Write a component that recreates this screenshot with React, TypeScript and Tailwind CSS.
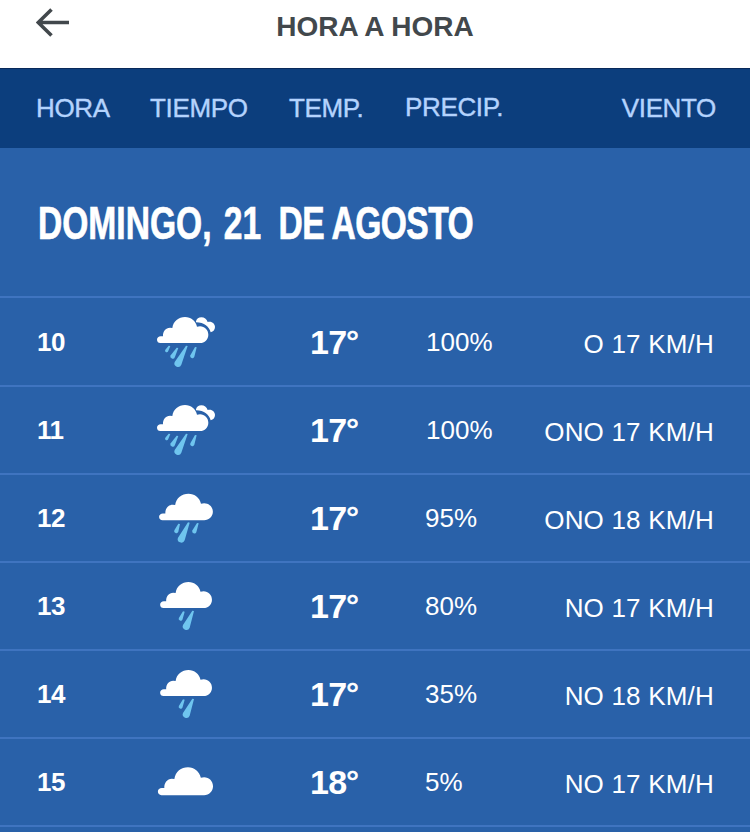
import React from 'react';

type Sky = 'heavy' | 'rain' | 'light' | 'cloud';

interface HourForecast {
  hour: string;
  sky: Sky;
  temp: number;
  precip: string;
  wind: string;
}

const hours: HourForecast[] = [
  { hour: '10', sky: 'heavy', temp: 17, precip: '100%', wind: 'O 17 KM/H' },
  { hour: '11', sky: 'heavy', temp: 17, precip: '100%', wind: 'ONO 17 KM/H' },
  { hour: '12', sky: 'rain', temp: 17, precip: '95%', wind: 'ONO 18 KM/H' },
  { hour: '13', sky: 'light', temp: 17, precip: '80%', wind: 'NO 17 KM/H' },
  { hour: '14', sky: 'light', temp: 17, precip: '35%', wind: 'NO 18 KM/H' },
  { hour: '15', sky: 'cloud', temp: 18, precip: '5%', wind: 'NO 17 KM/H' },
];

const Cloud = () => (
  <path
    fill="#fff"
    d="M46 114C40 114 36 110 36 104C36 98 41 94 47 94H54C53 80 62 68 75 68Q79 68 82 69C85 48 101 36 120 36C138 36 152 48 156 65Q160 64 165 64C179 64 190 75 190 89C190 103 179 114 165 114Z"
  />
);

// Slanted drop: pointed at the top right, round at the bottom left
const Drop = ({ x, y, dx, dy, r }: { x: number; y: number; dx: number; dy: number; r: number }) => (
  <path
    fill="#6fc5ef"
    d={`M${x - 2} ${y}L${x - dx - r} ${y + dy - r * 0.4}A${r} ${r} 0 1 0 ${x - dx + r} ${y + dy + r * 0.4}L${x + 3} ${y + 1}Z`}
  />
);

const SkyIcon = ({ sky }: { sky: Sky }) => (
  <svg viewBox="0 0 240 210" className="h-[70px] w-20">
    {sky === 'heavy' && (
      <>
        <path
          fill="#fff"
          d="M153 49C155 41 161 37 169 37C178 37 185 42 188 51C200 47 210 56 210 66C210 74 205 80 197 82C193 66 178 52 153 52Z"
        />
        <Cloud />
        <Drop x={73} y={122} dx={8} dy={15} r={4.5} />
        <Drop x={97} y={128} dx={14} dy={26} r={6.5} />
        <Drop x={125} y={122} dx={26} dy={53} r={10} />
        <Drop x={152} y={126} dx={10} dy={27} r={6} />
      </>
    )}
    {sky === 'rain' && (
      <>
        <g transform="translate(4.5 2) scale(1.048 1.015)"><Cloud /></g>
        <Drop x={102} y={128} dx={8} dy={22} r={6} />
        <Drop x={131} y={124} dx={22} dy={50} r={10} />
        <Drop x={158} y={126} dx={10} dy={25} r={6} />
      </>
    )}
    {sky === 'light' && (
      <>
        <g transform="translate(9 0) scale(1.01 1)"><Cloud /></g>
        <Drop x={116} y={124} dx={9} dy={22} r={5.5} />
        <Drop x={144} y={122} dx={20} dy={47} r={10} />
      </>
    )}
    {sky === 'cloud' && (
      <g transform="translate(0 28) scale(1.074 1.075)"><Cloud /></g>
    )}
  </svg>
);

const HourRow = ({ item }: { item: HourForecast }) => (
  <div className="grid h-[88px] grid-cols-[145px_165px_115px_1fr_auto] border-b-2 border-[#3f74c0] pr-9 text-[26px] leading-[30px] text-white">
    <div className="pt-7 pl-[37px] font-bold tracking-[-0.5px]">{item.hour}</div>
    <div className={item.sky === 'light' ? 'pt-[7px]' : 'pt-1.5'}>
      <SkyIcon sky={item.sky} />
    </div>
    <div className="pt-6 text-[34px] leading-[38px] font-bold tracking-[-0.6px]">
      {item.temp}
      <span className="-ml-px font-normal [-webkit-text-stroke:0.7px]">°</span>
    </div>
    <div className={item.precip === '100%' ? 'pt-7 pl-px' : 'pt-7'}>{item.precip}</div>
    <div className="pt-[30px] tracking-[0.2px]">{item.wind}</div>
  </div>
);

export default function App() {
  return (
    <div className="h-[832px] w-[750px] overflow-hidden bg-[#2961a9] font-['Liberation_Sans',Arial,sans-serif] whitespace-pre">
      {/* Title bar */}
      <header className="grid h-[69px] grid-cols-[200px_1fr_200px] border-b border-[#08295a] bg-white">
        <div className="pt-2 pl-9">
          <svg viewBox="0 0 34 30" className="h-[30px] w-[34px]" fill="none" stroke="#42484c" strokeWidth="3.6">
            <path d="M33 14.5H2M15.5 1.5L2.2 14.5L15.5 27.5" />
          </svg>
        </div>
        <h1 className="pt-[11px] text-center text-[28px] leading-8 font-bold text-[#42484c]">HORA A HORA</h1>
      </header>

      {/* Column labels */}
      <div className="grid h-[79px] grid-cols-[114px_139px_116px_1fr_auto] bg-[#0c3e7d] pt-6 pr-[34px] pl-9 text-[26px] leading-[30px] tracking-[-0.35px] text-[#b4d3fd] [-webkit-text-stroke:0.4px]">
        <div>HORA</div>
        <div>TIEMPO</div>
        <div>TEMP.</div>
        <div className="-mt-px">PRECIP.</div>
        <div>VIENTO</div>
      </div>

      {/* Day heading, condensed */}
      <div className="h-[150px] border-b-2 border-[#3f74c0] pt-12 pl-[38px] text-white">
        <h2 className="w-max origin-left scale-x-[0.73] text-[46px] leading-[54px] font-bold [-webkit-text-stroke:0.7px]">
          DOMINGO,<span className="ml-1"> 21</span>
          <span className="ml-3 tracking-[-0.8px]"> DE AGOSTO</span>
        </h2>
      </div>

      <div className="pt-px">
        {hours.map(item => (
          <HourRow key={item.hour} item={item} />
        ))}
      </div>
    </div>
  );
}
